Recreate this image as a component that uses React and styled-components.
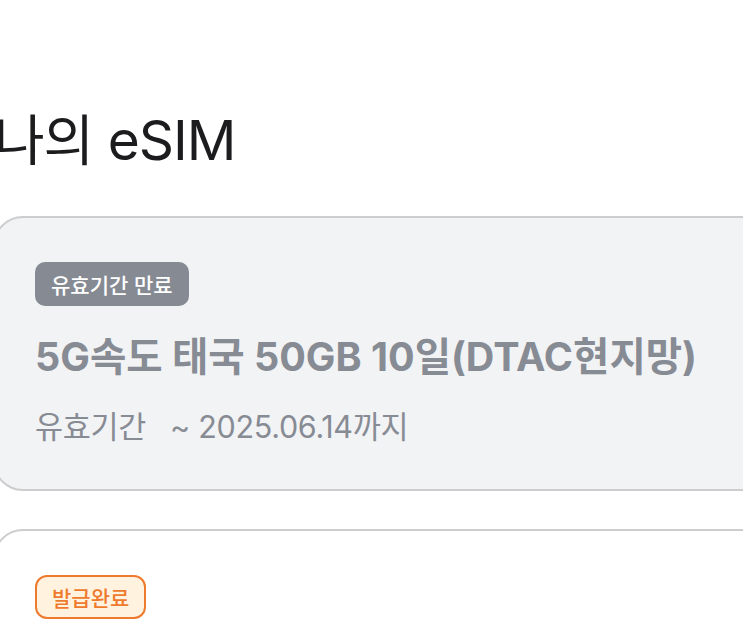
import React from 'react';
import styled, { createGlobalStyle } from 'styled-components';

const GlobalStyle = createGlobalStyle`
    html, body {
        margin: 0;
        padding: 0;
        background: #ffffff;
        overflow: hidden;
    }
    body {
        font-family: Inter, "Noto Sans CJK KR", sans-serif;
    }
`;

const Page = styled.div`
    display: flex;
    flex-direction: column;
    width: 820px;
    margin-left: -7px;
    padding-top: 102px;
`;

const PageTitle = styled.h1`
    margin: 0 0 38px 1px;
    font-size: 55px;
    font-weight: 400;
    line-height: 76px;
    letter-spacing: -1px;
    color: #1c1c1e;
`;

const CardList = styled.div`
    display: flex;
    flex-direction: column;
    gap: 38px;
`;

const Card = styled.div`
    display: flex;
    flex-direction: column;
    align-items: flex-start;
    padding: 44px 40px 41px 40px;
    border: 2px solid #cdcdcf;
    border-radius: 30px;
    background: ${props => (props.expired ? '#f2f3f5' : '#ffffff')};
`;

const Badge = styled.span`
    display: inline-flex;
    align-items: center;
    height: 44px;
    box-sizing: border-box;
    padding: 0 ${props => (props.outlined ? '15px' : '16px')};
    border-radius: ${props => (props.outlined ? '12px' : '10px')};
    font-size: 21px;
    font-weight: 500;
    color: ${props => (props.outlined ? '#ee7b2d' : '#ffffff')};
    background: ${props => (props.outlined ? '#fff3e0' : '#868a93')};
    border: ${props => (props.outlined ? '2px solid #ee7b2d' : 'none')};
`;

const CardTitle = styled.div`
    margin-top: 26px;
    font-size: 39.5px;
    font-weight: 700;
    line-height: 50px;
    letter-spacing: 0;
    color: #878b94;
`;

const Period = styled.div`
    display: flex;
    gap: 24px;
    margin-top: 24px;
    font-size: 30.5px;
    font-weight: 400;
    line-height: 42px;
    letter-spacing: -0.3px;
    color: #878b94;
`;

const esims = [
    {
        id: 1,
        status: '유효기간 만료',
        expired: true,
        title: '5G속도 태국 50GB 10일(DTAC현지망)',
        until: '~ 2025.06.14까지',
    },
    {
        id: 2,
        status: '발급완료',
        expired: false,
        title: '5G속도 일본 무제한 5일',
        until: '~ 2025.08.02까지',
    },
];

const App = () => {
    return (
        <>
            <GlobalStyle />
            <Page>
                <PageTitle>나의 eSIM</PageTitle>
                <CardList>
                    {esims.map(item => (
                        <Card key={item.id} expired={item.expired}>
                            <Badge outlined={!item.expired}>{item.status}</Badge>
                            <CardTitle>{item.title}</CardTitle>
                            <Period>
                                <span>유효기간</span>
                                <span>{item.until}</span>
                            </Period>
                        </Card>
                    ))}
                </CardList>
            </Page>
        </>
    );
};

export default App;
